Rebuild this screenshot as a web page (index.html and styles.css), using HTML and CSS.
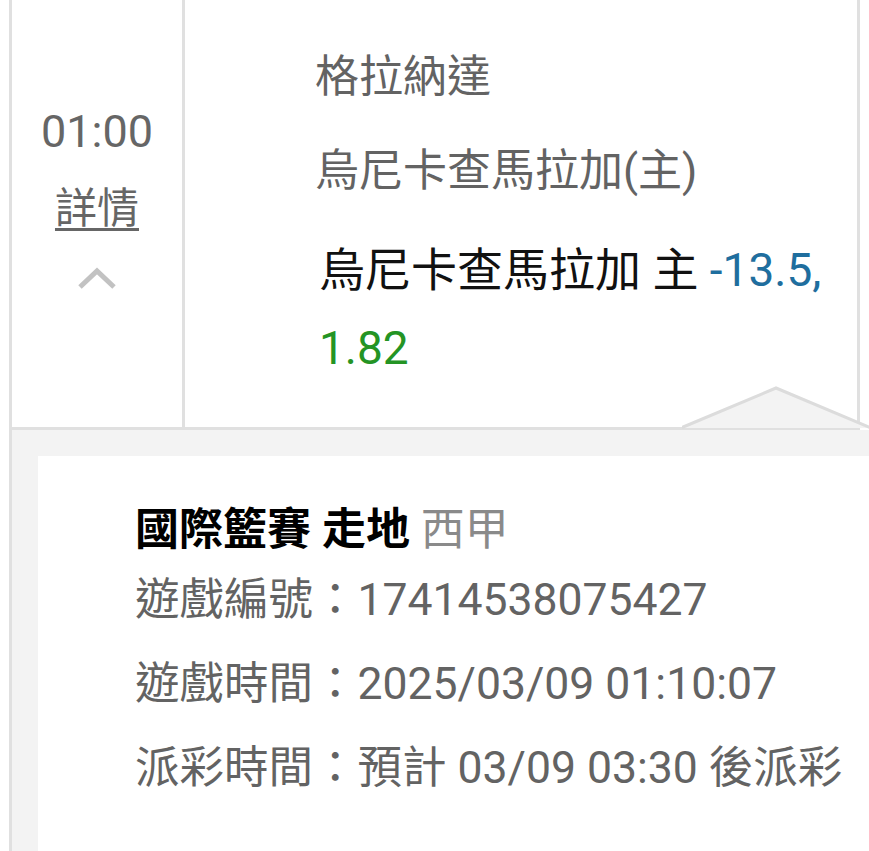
FILE: index.html
```html
<!DOCTYPE html>
<html lang="zh-Hant">
<head>
<meta charset="utf-8">
<link rel="stylesheet" href="styles.css">
</head>
<body>
<div class="page">
  <div class="row">
    <div class="time-col">
      <div class="time">01:00</div>
      <a class="detail-link">詳情</a>
      <svg class="chevron" width="40" height="26" viewBox="0 0 40 26"><polyline points="3,22 20,6 37,22" fill="none" stroke="#c2c2c2" stroke-width="5"/></svg>
    </div>
    <div class="info-col">
      <div class="league">格拉納達</div>
      <div class="team">烏尼卡查馬拉加(主)</div>
      <div class="bet">烏尼卡查馬拉加 主 <span class="hcp">-13.5,</span> <span class="odds">1.82</span></div>
    </div>
  </div>
  <div class="panel">
    <svg class="pointer" width="190" height="44" viewBox="0 0 190 44"><polygon points="0,42 94,2 188,42" fill="#f3f3f3"/><polyline points="0,41.5 94,2 188,41.5" fill="none" stroke="#dcdcdc" stroke-width="3"/></svg>
    <div class="card">
      <div class="title"><b>國際籃賽 走地</b> <span class="sub">西甲</span></div>
      <div class="line">遊戲編號：17414538075427</div>
      <div class="line">遊戲時間：2025/03/09 01:10:07</div>
      <div class="line">派彩時間：預計 03/09 03:30 後派彩</div>
    </div>
  </div>
</div>
</body>
</html>
```
FILE: styles.css
```css
html, body {
  margin: 0;
  padding: 0;
  background: #ffffff;
}
body {
  font-family: Roboto, "Noto Sans CJK TC", sans-serif;
  width: 869px;
  height: 851px;
  overflow: hidden;
}
.page {
  margin-left: 9px;
  border-left: 3px solid #e0e0e0;
  height: 851px;
  display: flex;
  flex-direction: column;
}
.row {
  display: grid;
  grid-template-columns: 173px 1fr;
  margin-right: 9px;
  border-right: 3px solid #e0e0e0;
  border-bottom: 3px solid #e0e0e0;
}
.time-col {
  border-right: 3px solid #e0e0e0;
  display: flex;
  flex-direction: column;
  align-items: center;
  padding-top: 104px;
}
.time {
  font-size: 45px;
  line-height: 56px;
  color: #666666;
}
.detail-link {
  margin-top: 25px;
  font-size: 42px;
  line-height: 48px;
  color: #666666;
  text-decoration: underline;
  text-decoration-thickness: 3px;
  text-underline-offset: 5px;
}
.chevron {
  margin-top: 32px;
  display: block;
}
.info-col {
  padding: 38px 0 40px 130px;
}
.league, .team {
  font-size: 44px;
  line-height: 78px;
  color: #636363;
}
.team {
  margin-top: 16px;
}
.bet {
  margin-top: 21px;
  font-size: 46px;
  line-height: 78px;
  color: #111111;
  margin-left: 4px;
}
.hcp {
  color: #1f6e9e;
}
.odds {
  color: #249424;
}
.panel {
  flex: 1;
  position: relative;
  background: #f3f3f3;
  padding: 26px 0 0 26px;
  display: flex;
}
.pointer {
  position: absolute;
  left: 670px;
  top: -44px;
}
.card {
  flex: 1;
  background: #ffffff;
  padding: 46px 0 0 97px;
}
.title {
  font-size: 44px;
  line-height: 56px;
  color: #000000;
}
.title b {
  font-weight: 700;
}
.sub {
  color: #8a8a8a;
}
.line {
  font-size: 44.5px;
  line-height: 84px;
  color: #636363;
}
```
